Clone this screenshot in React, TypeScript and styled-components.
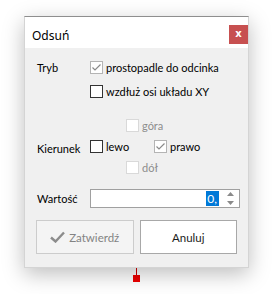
import React from "react";
import styled, {createGlobalStyle} from "styled-components";

const FONT = `Lato, "Noto Sans", sans-serif`;
const TITLE_FONT = `"Noto Sans", "Open Sans", sans-serif`;

const GlobalStyle = createGlobalStyle`
  body {
    margin: 0;
    background: #ffffff;
    font-family: ${FONT};
  }
`;

const Page = styled.div`
  display: flex;
  flex-direction: column;
  align-items: flex-start;
  padding: 16px 0 0 24px;
  width: 279px;
  height: 294px;
  box-sizing: border-box;
  overflow: hidden;
`;

const DialogColumn = styled.div`
  display: flex;
  flex-direction: column;
  align-items: center;
`;

const Dialog = styled.div`
  width: 225px;
  box-sizing: border-box;
  border: 1px solid #d4d4d4;
  border-top-color: #8e8e8e;
  background: #f0f0f0;
  box-shadow: 0 6px 20px rgba(0, 0, 0, 0.26);
  position: relative;
  z-index: 1;
`;

const TitleBar = styled.div`
  display: flex;
  align-items: center;
  justify-content: space-between;
  height: 31px;
  box-sizing: border-box;
  padding: 4px 0 0 7px;
  background: #ffffff;
`;

const Title = styled.span`
  font-family: ${TITLE_FONT};
  font-size: 12px;
  color: #000000;
  margin-top: 1px;
`;

const CloseButton = styled.div`
  width: 19px;
  height: 19px;
  background: #c75050;
  color: #ffffff;
  font-size: 10px;
  font-weight: bold;
  line-height: 18px;
  text-align: center;
  font-family: "DejaVu Sans", sans-serif;
`;

const Body = styled.div`
  display: flex;
  flex-direction: column;
  padding: 9px 11px 13px 11px;
`;

const FormRow = styled.div<{ $height?: number; $top?: number }>`
  display: grid;
  grid-template-columns: 54px 1fr;
  align-items: center;
  height: ${p => p.$height ?? 20}px;
  margin-top: ${p => p.$top ?? 0}px;
`;

const Label = styled.span`
  font-size: 11px;
  color: #000000;
  padding-left: 1px;
`;

const DirGrid = styled.div`
  display: grid;
  grid-template-columns: 54px 36px 28px 1fr;
  grid-template-rows: repeat(3, 21px);
  align-items: center;
  margin-top: 14px;
`;

const Cell = styled.div<{ $col: string; $row: number; $indent?: number }>`
  grid-column: ${p => p.$col};
  grid-row: ${p => p.$row};
  padding-left: ${p => p.$indent ?? 0}px;
`;

const CheckLabel = styled.label<{ $disabled?: boolean }>`
  display: flex;
  align-items: center;
  gap: 3px;
  font-size: 11px;
  color: ${p => (p.$disabled ? "#8d8d8d" : "#000000")};
  white-space: nowrap;
`;

const Box = styled.span<{ $disabled?: boolean; $checked?: boolean }>`
  display: flex;
  align-items: center;
  justify-content: center;
  width: 13px;
  height: 13px;
  box-sizing: border-box;
  background: #ffffff;
  border: 1px solid ${p => (p.$disabled ? "#d9d9d9" : p.$checked ? "#b4b4b4" : "#333333")};
`;

const Check: React.FC<{ checked?: boolean; disabled?: boolean; text: string }> = ({checked, disabled, text}) => (
    <CheckLabel $disabled={disabled}>
        <Box $disabled={disabled} $checked={checked}>
            {checked && (
                <svg width="11" height="11" viewBox="0 0 11 11">
                    <path d="M1.5 5.5 L4 8 L9.5 2.5" fill="none" stroke="#8a8a8a" strokeWidth="1.2"/>
                </svg>
            )}
        </Box>
        {text}
    </CheckLabel>
);

const SpinInput = styled.div`
  display: flex;
  align-items: center;
  width: 150px;
  height: 19px;
  box-sizing: border-box;
  border: 1px solid #a0a0a0;
  background: #ffffff;
`;

const Value = styled.div`
  flex: 1;
  display: flex;
  justify-content: flex-end;
  padding-right: 4px;
`;

const Selected = styled.span`
  background: #0078d7;
  color: #ffffff;
  font-size: 12px;
  line-height: 15px;
  padding: 0 2px 0 1px;
`;

const Spinner = styled.div`
  display: flex;
  flex-direction: column;
  align-items: center;
  justify-content: space-between;
  width: 14px;
  height: 13px;
  margin-right: 2px;
`;

const ButtonRow = styled.div`
  display: flex;
  gap: 6px;
  margin-top: 12px;
`;

const Button = styled.div<{ $disabled?: boolean }>`
  display: flex;
  align-items: center;
  justify-content: center;
  gap: 4px;
  width: 98px;
  height: 34px;
  box-sizing: border-box;
  font-size: 11.5px;
  border: 1px solid ${p => (p.$disabled ? "#cccccc" : "#a8a8a8")};
  background: ${p => (p.$disabled ? "#f4f4f4" : "#ffffff")};
  color: ${p => (p.$disabled ? "#838383" : "#1a1a1a")};
`;

const Stem = styled.div`
  width: 1px;
  height: 7px;
  background: #d00000;
`;

const Marker = styled.div`
  width: 7px;
  height: 7px;
  background: #ee0000;
`;

const App: React.FC = () => {
    return (
        <>
            <GlobalStyle/>
            <Page>
                <DialogColumn>
                    <Dialog>
                        <TitleBar>
                            <Title>Odsuń</Title>
                            <CloseButton>x</CloseButton>
                        </TitleBar>
                        <Body>
                            <FormRow>
                                <Label>Tryb</Label>
                                <Check checked text="prostopadle do odcinka"/>
                            </FormRow>
                            <FormRow $top={4}>
                                <span/>
                                <Check text="wzdłuż osi układu XY"/>
                            </FormRow>

                            <DirGrid>
                                <Cell $col="2 / span 3" $row={1} $indent={36}>
                                    <Check disabled text="góra"/>
                                </Cell>
                                <Cell $col="1" $row={2}><Label>Kierunek</Label></Cell>
                                <Cell $col="2 / span 2" $row={2}><Check text="lewo"/></Cell>
                                <Cell $col="4" $row={2}><Check checked text="prawo"/></Cell>
                                <Cell $col="2 / span 3" $row={3} $indent={36}>
                                    <Check disabled text="dół"/>
                                </Cell>
                            </DirGrid>

                            <FormRow $height={19} $top={11}>
                                <Label>Wartość</Label>
                                <SpinInput>
                                    <Value><Selected>0,</Selected></Value>
                                    <Spinner>
                                        <svg width="7" height="4" viewBox="0 0 7 4">
                                            <path d="M0 4 L3.5 0 L7 4 Z" fill="#8a8a8a"/>
                                        </svg>
                                        <svg width="7" height="4" viewBox="0 0 7 4">
                                            <path d="M0 0 L3.5 4 L7 0 Z" fill="#8a8a8a"/>
                                        </svg>
                                    </Spinner>
                                </SpinInput>
                            </FormRow>

                            <ButtonRow>
                                <Button $disabled>
                                    <svg width="15" height="12" viewBox="0 0 15 12">
                                        <path d="M1 6.5 L5.5 10.5 L14 1.5" fill="none" stroke="#8c8c8c" strokeWidth="2.4"/>
                                    </svg>
                                    Zatwierdź
                                </Button>
                                <Button>Anuluj</Button>
                            </ButtonRow>
                        </Body>
                    </Dialog>
                    <Stem/>
                    <Marker/>
                </DialogColumn>
            </Page>
        </>
    );
};

export default App;
